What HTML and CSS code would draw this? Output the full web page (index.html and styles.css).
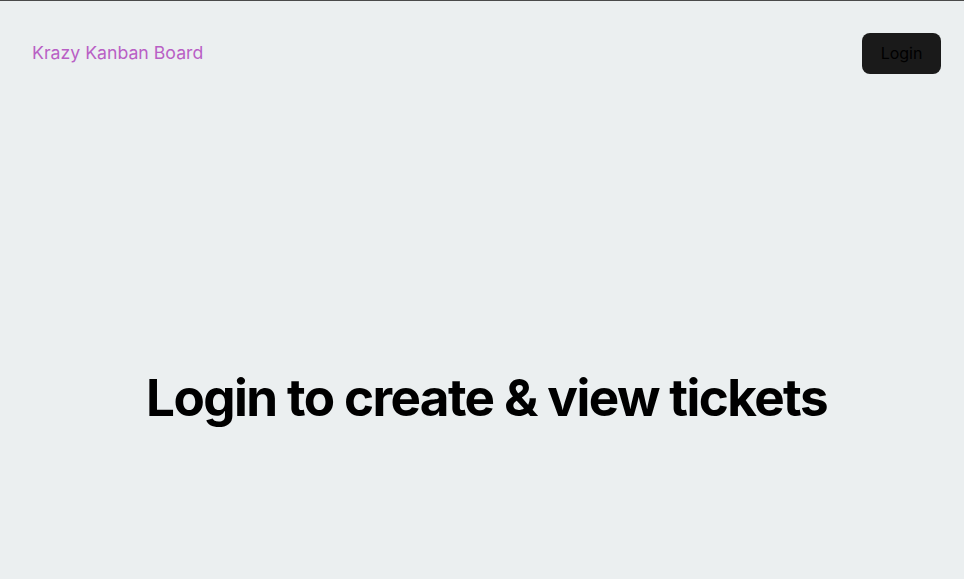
FILE: index.html
```html
<!DOCTYPE html>
<html lang="en">
<head>
<meta charset="utf-8">
<title>Krazy Kanban Board</title>
<link rel="stylesheet" href="styles.css">
</head>
<body>
<div class="app">
  <nav class="nav">
    <div class="brand">Krazy Kanban Board</div>
    <button class="login-btn" type="button">Login</button>
  </nav>
  <main class="main">
    <h1 class="headline">Login to create &amp; view tickets</h1>
  </main>
</div>
</body>
</html>
```
FILE: styles.css
```css
* { box-sizing: border-box; }
html, body {
  margin: 0;
  padding: 0;
  height: 100%;
}
body {
  background: #ebeff0;
  border-top: 1px solid #4a4a4a;
  font-family: Inter, "Noto Sans", sans-serif;
  color: #000;
}
.app {
  display: flex;
  flex-direction: column;
  height: 578px;
}
.nav {
  display: flex;
  justify-content: space-between;
  align-items: center;
  padding: 32px 23px 0 32px;
}
.brand {
  color: #b95fc5;
  font-size: 17.7px;
  font-weight: 400;
  line-height: 1;
}
.login-btn {
  font-family: Inter, sans-serif;
  font-size: 16px;
  font-weight: 400;
  color: #000;
  background: #1a1a1a;
  border: 1px solid transparent;
  border-radius: 8px;
  padding: 9.6px 17.6px;
  line-height: 1.21;
  cursor: pointer;
}
.main {
  flex: 1;
  display: flex;
  justify-content: center;
  padding-top: 295px;
  padding-left: 9px;
}
.headline {
  margin: 0;
  font-size: 51.2px;
  font-weight: 700;
  line-height: 1.1;
  letter-spacing: -1.6px;
}
```
